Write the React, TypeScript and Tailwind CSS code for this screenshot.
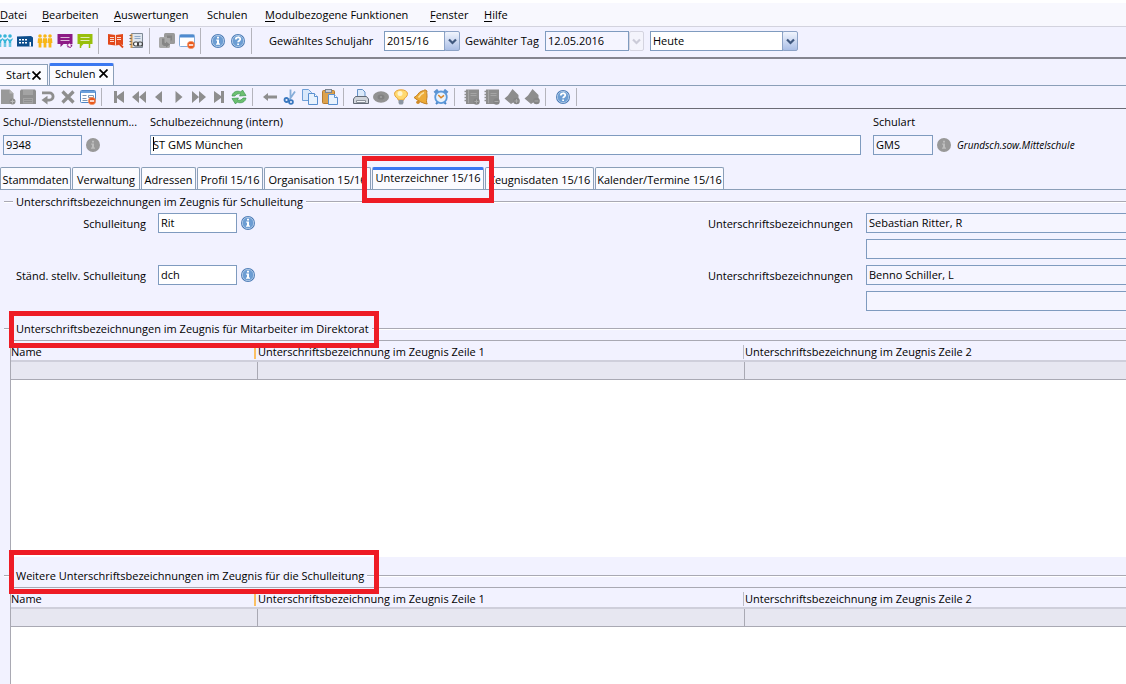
import React from "react";

type IconProps = { children: React.ReactNode };

function Svg({ children }: IconProps) {
  return (
    <svg viewBox="0 0 16 16" width="16" height="16" className="block shrink-0" aria-hidden="true">
      {children}
    </svg>
  );
}

function People({ color, heads }: { color: string; heads: boolean }) {
  return (
    <Svg>
      {[3, 8, 13].map((x) => (
        <g key={x} fill={color}>
          <circle cx={x} cy={3} r={1.8} />
          {heads ? (
            <path d={`M${x - 2.6} 5l1.6 1.4h2L${x + 2.6} 5v1.6L${x + 1.2} 8.6V14h-.9v-4h-.6v4h-.9V8.600L${x - 2.6} 6.600z`} />
          ) : (
            <path d={`M${x - 2} 5.300h4l.4 4.700h-1v4.500h-2.800V10h-1z`} />
          )}
        </g>
      ))}
    </Svg>
  );
}

function BuildingIcon() {
  return (
    <Svg>
      <path fill="#0d4d8c" d="M0 3.500l14-.5 2 1.500v9h-16z" />
      <path fill="#fff" d="M2 6h2v1.500h-2zM5 6h2v1.500h-2zM8 6h2v1.500h-2zM2 9h2v1.500h-2zM5 9h2v1.500h-2zM8 9h2v1.500h-2zM12.500 9h1.500v4.500h-1.500z" />
    </Svg>
  );
}

function BoardIcon({ color, gear }: { color: string; gear?: boolean }) {
  return (
    <Svg>
      <path fill={color} d="M.5 1h15v10h-9l-3 3v-3h-3z" />
      <path stroke="#fff" strokeOpacity=".7" d="M3.500 4.500h9M3.500 7.500h9" />
      {gear ? (
        <circle cx="12.500" cy="12.300" r="2" fill="#fff" stroke={color} strokeWidth="1.500" strokeDasharray="1.200 .6" />
      ) : (
        <path stroke={color} strokeWidth="1.500" d="M3.500 11v4M12.500 11v4" />
      )}
    </Svg>
  );
}

function RedBookIcon() {
  return (
    <Svg>
      <path fill="#e2481b" d="M0 1l7.500 1 7.500-1v11l-2-.5-3-3 1 3.500-3.500.5-7.500-1z" />
      <path stroke="#fff" strokeOpacity=".8" d="M7.500 2v10.500M2 4.500h4M2 6.500h4M2 8.500h4M9 4.500h4M9 6.500h4" />
      <path stroke="#e2481b" strokeWidth="1.800" d="M10 9.500l5 5" />
    </Svg>
  );
}

function NotebookIcon() {
  return (
    <Svg>
      <path fill="#dfe6ee" stroke="#7e8a98" d="M3.500.5h11v14h-11z" />
      <path stroke="#d39a53" strokeWidth="2" d="M3.500 1v14" />
      <path stroke="#666" d="M1.500 2.500h2M1.500 5.500h2M1.500 8.500h2M1.500 11.500h2" />
      <path stroke="#8fa9c8" d="M6.500 3.500h6M6.500 5.500h6" />
      <rect x="5.500" y="9" width="5" height="4" rx="2" fill="#fff" stroke="#444" strokeWidth="1.200" />
      <rect x="9.500" y="9" width="5" height="4" rx="2" fill="none" stroke="#444" strokeWidth="1.200" />
    </Svg>
  );
}

function GraySwapIcon() {
  return (
    <Svg>
      <rect x="5" y="0" width="11" height="11" rx="1.500" fill="#9a9a9a" />
      <rect x="0" y="4" width="11" height="11" rx="1.500" fill="#a8a8a8" />
      <path fill="#858585" d="M3 5.500v5c0 2 2 2.500 4 2.500v1.500l4-3-4-3v1.500c-1.500 0-1.500-.5-1.500-1.500v-3zM8 2.500h5v5h-1.500v-2.500h-3.500z" />
    </Svg>
  );
}

function MinusBadge() {
  return (
    <g>
      <circle cx="12" cy="12" r="3.700" fill="#e9581c" stroke="#f6a47a" strokeWidth=".6" />
      <path stroke="#fff" strokeWidth="1.500" d="M9.800 12h4.400" />
    </g>
  );
}

function WindowMinusIcon() {
  return (
    <Svg>
      <rect x=".5" y="1.500" width="15" height="12" rx="1" fill="#fff" stroke="#82abd9" />
      <path fill="#4f8bd0" d="M1 2h14v2.500h-14z" />
      <MinusBadge />
    </Svg>
  );
}

function FormMinusIcon() {
  return (
    <Svg>
      <rect x=".5" y="1.500" width="15" height="12" rx="1" fill="#fff" stroke="#4f86c6" />
      <path fill="#6ba0dc" d="M1 2h14v2h-14z" />
      <path stroke="#7e96b3" d="M2.500 6.500h4M2.500 9.500h4M8.500 6.500h5v2h-5zM2.500 11.500h5" fill="none" />
      <MinusBadge />
    </Svg>
  );
}

function RoundIcon({ kind, gray }: { kind: "info" | "help"; gray?: boolean }) {
  return (
    <Svg>
      <circle cx="8" cy="8" r="7" fill={gray ? "#999" : "#4a7ab5"} />
      <circle cx="8" cy="8" r="5.700" fill={gray ? "#999" : "#6c9dd3"} stroke={gray ? "#999" : "#b4cde9"} strokeWidth=".9" />
      {kind === "info" ? (
        <path fill={gray ? "#bdbdbd" : "#fff"} d="M7 3.800h2v1.800h-2zM6.200 6.500h2.800v4h1v1.300h-4v-1.300h1v-2.700h-.8z" />
      ) : (
        <path fill="none" stroke="#fff" strokeWidth="1.800" d="M5.800 6.500c0-3 4.500-2.800 4.500-.4 0 1.600-2.200 1.600-2.200 3.200M8.100 10.500v1.600" />
      )}
    </Svg>
  );
}

const G = "#8e8e8e";

function GrayPath({ d }: { d: string }) {
  return (
    <Svg>
      <path fill={G} fillRule="evenodd" d={d} />
    </Svg>
  );
}

function NewIcon() {
  return (
    <Svg>
      <path fill="#999" d="M1 .5h8.500l4 4v10.500h-12.500z" />
      <path fill="#b5b5b5" d="M9.500 .5v4h4z" />
      <circle cx="12.500" cy="12.500" r="3" fill="#8a8a8a" />
      <path stroke="#bbb" d="M12.500 10.500v4M10.500 12.500h4" />
    </Svg>
  );
}

function SaveIcon() {
  return (
    <Svg>
      <path fill="#8f8f8f" d="M0 2l1-1.500h14l1 1.500v13h-16z" />
      <path fill="#a3a3a3" d="M3 1h10v5h-10zM3 9h10v5.500h-10z" />
      <path stroke="#8f8f8f" d="M4 10.500h8M4 12.500h8" />
    </Svg>
  );
}

function UndoIcon() {
  return (
    <Svg>
      <path fill="none" stroke={G} strokeWidth="2.800" d="M2 3.900h7.500a3.600 3.600 0 0 1 0 7.200h-3.500" />
      <path fill={G} d="M7.500 6.800v8.700l-6-4.400z" />
    </Svg>
  );
}

function CrossIcon() {
  return (
    <Svg>
      <path stroke={G} strokeWidth="3.200" d="M2.500 2.500l11 11M13.500 2.500l-11 11" />
    </Svg>
  );
}

function RefreshIcon() {
  return (
    <Svg>
      <path fill="#6cc070" stroke="#3c9650" strokeWidth=".7" d="M1 7c.5-4 5-6 9-4l1.500-2 3.500 5.500-6.500.5 1.200-1.800c-2.500-1-4.700 0-5.700 1.800zM15 9c-.5 4-5 6-9 4l-1.500 2-3.500-5.500 6.500-.5-1.200 1.800c2.500 1 4.700 0 5.700-1.800z" />
    </Svg>
  );
}

function ScissorsIcon() {
  return (
    <Svg>
      <path stroke="#86aed9" strokeWidth="1.800" d="M8.500.5v9M13 2.500l-5.500 8" />
      <circle cx="4.500" cy="11" r="2" fill="none" stroke="#3a78bf" strokeWidth="1.800" />
      <circle cx="9" cy="13" r="1.900" fill="none" stroke="#3a78bf" strokeWidth="1.800" />
    </Svg>
  );
}

function CopyIcon() {
  return (
    <Svg>
      <path fill="#d9e8fa" stroke="#6d9fd8" d="M.5.5h6l3 3v8h-9z" />
      <path fill="#e8f2fd" stroke="#5a90d0" d="M6.500 4.500h6l3 3v8h-9z" />
      <path fill="#fff" stroke="#5a90d0" d="M12.500 4.500v3h3" />
    </Svg>
  );
}

function PasteIcon() {
  return (
    <Svg>
      <rect x=".5" y="1.500" width="12" height="13" rx="1" fill="#dca24c" stroke="#b57b30" />
      <rect x="3.500" y=".5" width="6" height="3" fill="#c9ced6" stroke="#7c8591" />
      <path fill="#e8f2fd" stroke="#5a90d0" d="M6.500 5.500h6l3 3v7h-9z" />
      <path fill="#fff" stroke="#5a90d0" d="M12.500 5.500v3h3" />
    </Svg>
  );
}

function PrintIcon() {
  return (
    <Svg>
      <path fill="#dbe9fa" stroke="#6391c7" d="M4.500.5h5l2.500 2.500v5h-7.500z" />
      <path fill="#d0d4da" stroke="#626975" d="M2.500 7.500h11l2 2.500v4.500h-15v-4.500z" />
      <path fill="#f4f6f9" stroke="#8c929b" d="M3.500 11.500h9v2h-9z" />
    </Svg>
  );
}

function EyeIcon() {
  return (
    <Svg>
      <ellipse cx="8" cy="8" rx="8" ry="5.800" fill="#929292" />
      <ellipse cx="8" cy="8" rx="3.500" ry="2.600" fill="#828282" />
      <circle cx="8" cy="8" r="1" fill="#a2a2a2" />
    </Svg>
  );
}

function BulbIcon() {
  return (
    <Svg>
      <path fill="#ffd970" stroke="#e5a23c" d="M8 .8c7.500 0 8.500 5.700 3 8.900v1.300h-6v-1.300c-5.500-3.200-4.500-8.900 3-8.900z" />
      <circle cx="7" cy="4.500" r="2.500" fill="#fff5cf" />
      <path fill="#8b95a2" d="M5.500 11h5v3l-1 1.500h-3l-1-1.500z" />
    </Svg>
  );
}

function BellIcon() {
  return (
    <Svg>
      <path fill="#edab38" stroke="#c07f22" d="M1 8.500c3.500-1 4-5.500 8-6.500 1.200-.3 2-.3 3-1.200l2 1.200c-.7 2 .3 3.500 0 6-.3 2.500-1 4.500.2 7-4-.5-9-3-13.200-6.500z" />
      <path stroke="#fbe0a0" strokeWidth="1.500" d="M5.500 8.500c1.500-2.500 2.500-4 5.500-5" fill="none" />
      <circle cx="5" cy="13.200" r="1.800" fill="#cf8a28" />
    </Svg>
  );
}

function ClockIcon() {
  return (
    <Svg>
      <path stroke="#5b92d0" strokeWidth="3" d="M1.500 3.800l3.500-2.800M14.500 3.800l-3.500-2.800" />
      <path stroke="#4a84c6" strokeWidth="2" d="M3 15l2-2M13 15l-2-2" />
      <circle cx="8" cy="8.300" r="5.800" fill="#e8f2fd" stroke="#5b98da" strokeWidth="1.800" />
      <path stroke="#d9862b" strokeWidth="1.500" fill="none" d="M5.300 6l2.700 2.800 3-2.500" />
    </Svg>
  );
}

function ListBadgeIcon({ plus }: { plus?: boolean }) {
  return (
    <Svg>
      <path fill="#8d8d8d" d="M2 .5h13v14.500h-13z" />
      <path stroke="#8d8d8d" strokeWidth="1.500" d="M.5 2.500h2M.5 5.500h2M.5 8.500h2M.5 11.500h2" />
      <path stroke="#a5a5a5" d="M4.500 1v13M6.500 4.500h6M6.500 6.500h6" />
      <circle cx="12.500" cy="12.500" r="3.200" fill="#848484" />
      <path stroke="#aaa" d={plus ? "M10.500 12.500h4M12.500 10.500v4" : "M10.500 12.500h4"} />
    </Svg>
  );
}

function HouseBadgeIcon({ plus }: { plus?: boolean }) {
  return (
    <Svg>
      <path fill="#8d8d8d" d="M8.500 0l6 6v4l-7.500 5-6.500-5.500 3.500-3z" />
      <circle cx="12.500" cy="12" r="3.300" fill="#858585" />
      <path stroke="#aaa" d={plus ? "M10.500 12h4M12.500 10v4" : "M10.500 12h4"} />
    </Svg>
  );
}

function Tool({ label, children }: { label: string; children: React.ReactNode }) {
  return (
    <button type="button" aria-label={label} className="block size-4 shrink-0">
      {children}
    </button>
  );
}

function Group({ children }: { children: React.ReactNode }) {
  return (
    <div className="flex shrink-0 items-center">
      <div className="flex gap-1">{children}</div>
      <span className="ml-[5px] mr-[9px] h-[26px] w-px bg-[#b4b4bc]" />
    </div>
  );
}

function SmallGroup({ children }: { children: React.ReactNode }) {
  return (
    <div className="flex shrink-0 items-center">
      <div className="flex gap-1">{children}</div>
      <span className="ml-[5px] mr-[9px] h-[18px] w-px bg-[#b4b4bc]" />
    </div>
  );
}

function DropArrow({ muted }: { muted?: boolean }) {
  return (
    <span
      className={
        muted
          ? "flex h-full w-[15px] items-center justify-center rounded-xs border border-[#d4d4e0] bg-[#f4f4fc]"
          : "flex h-full w-4 items-center justify-center rounded-xs border border-[#8da3c6] bg-linear-to-b from-[#f1f5fd] to-[#abbfe6]"
      }
    >
      <svg viewBox="0 0 9 7" width="9" height="7" aria-hidden="true">
        <path d="M1 1.500l3.500 3.500 3.500-3.500" fill="none" stroke={muted ? "#cbcbd8" : "#40597f"} strokeWidth="2.200" />
      </svg>
    </span>
  );
}

const menus = [
  { key: "D", rest: "atei", box: "w-[42px]" },
  { key: "B", rest: "earbeiten", box: "w-[72px]" },
  { key: "A", rest: "uswertungen", box: "w-[93px]" },
  { key: "", rest: "Schulen", box: "w-[58px]" },
  { key: "M", rest: "odulbezogene Funktionen", box: "w-[165px]" },
  { key: "F", rest: "enster", box: "w-[54px]" },
  { key: "H", rest: "ilfe", box: "w-[42px]" },
];

const tabs = [
  { text: "Stammdaten", box: "w-[71px]" },
  { text: "Verwaltung", box: "w-[68px]" },
  { text: "Adressen", box: "w-[55px]" },
  { text: "Profil 15/16", box: "w-[66px]" },
  { text: "Organisation 15/16", box: "w-[107px]" },
  { text: "Unterzeichner 15/16", box: "w-[112px]", active: true },
  { text: "Zeugnisdaten 15/16", box: "w-[109px]" },
  { text: "Kalender/Termine 15/16", box: "w-[129px]" },
];

function Legend({ children }: { children: React.ReactNode }) {
  return (
    <div className="flex h-4 items-center pl-1">
      <span className="h-0.5 w-[9px] border-t border-[#a9a9b3] bg-white" />
      <h2 className="px-[3px] whitespace-nowrap">{children}</h2>
      <span className="h-0.5 flex-1 border-t border-[#a9a9b3] bg-white" />
    </div>
  );
}

const headCell = "h-[22px] border-t border-b-2 border-t-[#a9a9b3] border-b-[#cfcfdb] p-0 font-normal";
const headText = "flex h-[19px] items-center justify-between pt-[3px]";
const bodyCell = "h-[18px] border-b border-[#a9a9b3] bg-[#e7e7f1] p-0";

function SignatureTable() {
  return (
    <table className="w-full table-fixed border-separate border-spacing-0 text-left">
      <colgroup>
        <col className="w-[247px]" />
        <col className="w-[487px]" />
        <col />
      </colgroup>
      <thead>
        <tr>
          <th className={headCell}>
            <div className={headText}>
              Name <span className="mr-0.5 h-3.5 w-0.5 bg-[#fbc063]" />
            </div>
          </th>
          <th className={headCell}>
            <div className={headText}>
              Unterschriftsbezeichnung im Zeugnis Zeile 1 <span className="mr-px h-3.5 w-px bg-[#bcbcc6]" />
            </div>
          </th>
          <th className={headCell}>
            <div className={headText}>Unterschriftsbezeichnung im Zeugnis Zeile 2</div>
          </th>
        </tr>
      </thead>
      <tbody>
        <tr>
          <td className={`${bodyCell} border-r`} />
          <td className={`${bodyCell} border-r`} />
          <td className={bodyCell} />
        </tr>
      </tbody>
    </table>
  );
}

const field = "block h-5 border border-[#7f9bbf] px-0.5 leading-4 outline-none";

function SignerRow({ id, label, code, value }: { id: string; label: string; code: string; value: string }) {
  return (
    <div className="flex items-start">
      <label htmlFor={id} className="mt-[3px] w-[146px] shrink-0 text-right">
        {label}
      </label>
      <input id={id} defaultValue={code} className={`${field} ml-3 w-[79px] shrink-0 bg-white pb-0.5`} />
      <button type="button" aria-label="Info" className="mt-0.5 ml-[3px] shrink-0">
        <RoundIcon kind="info" />
      </button>
      <label htmlFor={`${id}-a`} className="mt-[3px] ml-auto w-[152px] shrink-0">
        Unterschriftsbezeichnungen
      </label>
      <div className="ml-1.5 flex w-[260px] shrink-0 flex-col gap-1.5">
        <input id={`${id}-a`} readOnly defaultValue={value} className={`${field} w-full border-r-0 bg-[#f5f5ff] pb-0.5`} />
        <input aria-label="Zeile 2" readOnly className={`${field} w-full border-r-0 bg-[#f5f5ff] pb-0.5`} />
      </div>
    </div>
  );
}

function CloseGlyph() {
  return (
    <svg viewBox="0 0 9 9" width="9" height="9" aria-hidden="true">
      <path d="M.5 .5l8 8M8.500 .5l-8 8" stroke="#000" strokeWidth="1.700" />
    </svg>
  );
}

export default function App() {
  return (
    <div className="flex min-h-screen flex-col overflow-hidden bg-[#f2f2ff] font-['Open_Sans','Noto_Sans',sans-serif] text-[11px] leading-4 text-black">
      <nav className="flex h-[27px] border-t-[3px] border-b border-t-white border-b-[#d3d3de] bg-[#f8f8fe] pt-1 whitespace-nowrap">
        {menus.map((m) => (
          <button type="button" key={m.rest} className={`${m.box} h-4 text-left`}>
            <span className="underline underline-offset-2">{m.key}</span>
            {m.rest}
          </button>
        ))}
      </nav>

      <div className="flex h-8 items-center border-b-2 border-[#85858f] pb-0.5 whitespace-nowrap">
        <div className="flex shrink-0 items-center">
          <div className="mr-1 flex w-[13px] justify-end overflow-hidden">
            <Tool label="Schüler"><People color="#35b4d8" heads /></Tool>
          </div>
          <Group>
            <Tool label="Schulen"><BuildingIcon /></Tool>
            <Tool label="Lehrkräfte"><People color="#f8b617" heads={false} /></Tool>
            <Tool label="Unterricht"><BoardIcon color="#8c1a86" gear /></Tool>
            <Tool label="Klassen"><BoardIcon color="#98bf0c" /></Tool>
          </Group>
        </div>
        <Group>
          <Tool label="Berichte"><RedBookIcon /></Tool>
          <Tool label="Notizbuch"><NotebookIcon /></Tool>
        </Group>
        <Group>
          <Tool label="Wechseln"><GraySwapIcon /></Tool>
          <Tool label="Fenster schließen"><WindowMinusIcon /></Tool>
        </Group>
        <Group>
          <Tool label="Info"><RoundIcon kind="info" /></Tool>
          <Tool label="Hilfe"><RoundIcon kind="help" /></Tool>
        </Group>
        <label htmlFor="year" className="ml-2 w-[115px] shrink-0">Gewähltes Schuljahr</label>
        <div className="relative h-5 w-[76px] shrink-0">
          <select id="year" className={`${field} w-[61px] appearance-none bg-white`}>
            <option>2015/16</option>
          </select>
          <span className="pointer-events-none absolute top-0 right-0 h-5"><DropArrow /></span>
        </div>
        <label htmlFor="day" className="ml-[5px] w-20 shrink-0">Gewählter Tag</label>
        <input id="day" readOnly defaultValue="12.05.2016" className={`${field} w-[84px] shrink-0 bg-[#f5f5ff] pb-0.5`} />
        <button type="button" aria-label="Kalender" disabled className="h-5 shrink-0"><DropArrow muted /></button>
        <div className="relative ml-1.5 h-5 w-[148px] shrink-0">
          <select aria-label="Zeitraum" className={`${field} w-[133px] appearance-none bg-white`}>
            <option>Heute</option>
          </select>
          <span className="pointer-events-none absolute top-0 right-0 h-5"><DropArrow /></span>
        </div>
      </div>

      <div className="flex h-[27px] items-end gap-px border-b border-[#8b9fb8] whitespace-nowrap">
        <div className="flex h-[21px] w-12 items-center border-t border-r border-[#8b9fb8] bg-[#fbfbff] pl-1.5">
          <button type="button" className="w-[26px] text-left">Start</button>
          <button type="button" aria-label="Start schließen"><CloseGlyph /></button>
        </div>
        <div className="flex h-[22px] w-[65px] items-center rounded-t-xs border-x border-t-3 border-x-[#8b9fb8] border-t-[#3b78f0] bg-[#fbfbff] pb-1 pl-[5px]">
          <button type="button" className="w-[44px] text-left">Schulen</button>
          <button type="button" aria-label="Schulen schließen"><CloseGlyph /></button>
        </div>
      </div>

      <div className="flex h-[23px] items-center border-b border-[#6b6b75]">
        <SmallGroup>
          <Tool label="Neu"><NewIcon /></Tool>
          <Tool label="Speichern"><SaveIcon /></Tool>
          <Tool label="Rückgängig"><UndoIcon /></Tool>
          <Tool label="Löschen"><CrossIcon /></Tool>
          <Tool label="Formular schließen"><FormMinusIcon /></Tool>
        </SmallGroup>
        <SmallGroup>
          <Tool label="Erster"><GrayPath d="M3 2h3v5l7-5v12l-7-5v5h-3z" /></Tool>
          <Tool label="Zurückblättern"><GrayPath d="M8 2v12l-7-6zM15 2v12l-7-6z" /></Tool>
          <Tool label="Vorheriger"><GrayPath d="M11 2v12l-7-6z" /></Tool>
          <Tool label="Nächster"><GrayPath d="M4.500 2v12l7-6z" /></Tool>
          <Tool label="Vorblättern"><GrayPath d="M1 2v12l7-6zM8 2v12l7-6z" /></Tool>
          <Tool label="Letzter"><GrayPath d="M13 2h-3v5l-7-5v12l7-5v5h3z" /></Tool>
          <Tool label="Aktualisieren"><RefreshIcon /></Tool>
        </SmallGroup>
        <SmallGroup>
          <Tool label="Links"><GrayPath d="M1 8l5-4v2.500h9v3h-9v2.500z" /></Tool>
          <Tool label="Ausschneiden"><ScissorsIcon /></Tool>
          <Tool label="Kopieren"><CopyIcon /></Tool>
          <Tool label="Einfügen"><PasteIcon /></Tool>
        </SmallGroup>
        <SmallGroup>
          <Tool label="Drucken"><PrintIcon /></Tool>
          <Tool label="Ansicht"><EyeIcon /></Tool>
          <Tool label="Hinweis"><BulbIcon /></Tool>
          <Tool label="Meldung"><BellIcon /></Tool>
          <Tool label="Termin"><ClockIcon /></Tool>
        </SmallGroup>
        <SmallGroup>
          <Tool label="Liste hinzufügen"><ListBadgeIcon plus /></Tool>
          <Tool label="Liste entfernen"><ListBadgeIcon /></Tool>
          <Tool label="Merkmal hinzufügen"><HouseBadgeIcon plus /></Tool>
          <Tool label="Merkmal entfernen"><HouseBadgeIcon /></Tool>
        </SmallGroup>
        <SmallGroup>
          <Tool label="Hilfe"><RoundIcon kind="help" /></Tool>
        </SmallGroup>
      </div>

      <section className="flex gap-3 pt-[5px] whitespace-nowrap">
        <div className="w-[135px] shrink-0 pl-[3px]">
          <label htmlFor="nr" className="mb-[5px] block">Schul-/Dienststellennum...</label>
          <div className="flex items-center gap-[3px]">
            <input id="nr" readOnly defaultValue="9348" className={`${field} w-[79px] bg-[#f5f5ff] pb-0.5`} />
            <RoundIcon kind="info" gray />
          </div>
        </div>
        <div className="flex-1 pl-[3px]">
          <label htmlFor="name" className="mb-[5px] block">Schulbezeichnung (intern)</label>
          <div className="relative">
            <input id="name" defaultValue="ST GMS München" className={`${field} w-full bg-white pb-0.5`} />
            <span className="absolute top-0.5 left-[3px] h-3.5 w-px bg-black" />
          </div>
        </div>
        <div className="w-[253px] shrink-0">
          <label htmlFor="art" className="mb-[5px] block">Schulart</label>
          <div className="flex items-center gap-[3px]">
            <input id="art" readOnly defaultValue="GMS" className={`${field} w-[60px] bg-[#f5f5ff] pb-0.5`} />
            <RoundIcon kind="info" gray />
            <span className="pl-0.5 text-[10px] italic">Grundsch.sow.Mittelschule</span>
          </div>
        </div>
      </section>

      <div className="relative mt-3 flex h-[23px] items-end gap-px border-b border-[#8b9fb8] whitespace-nowrap">
        {tabs.map((t) => (
          <button
            type="button"
            key={t.text}
            className={`${t.box} shrink-0 rounded-t-xs border-x text-center ${
              t.active
                ? "h-[22px] border-t-3 border-x-[#8b9fb8] border-t-[#3b78f0] bg-[#fbfbff] pb-1"
                : "h-[22px] border-t border-[#8b9fb8] bg-[#fbfbff] pt-0.5"
            }`}
          >
            {t.text}
          </button>
        ))}
        <span className="pointer-events-none absolute -top-[11px] left-[362px] h-[47px] w-[132px] border-5 border-[#ee1c25]" />
      </div>

      <section className="pt-1">
        <Legend>Unterschriftsbezeichnungen im Zeugnis für Schulleitung</Legend>
        <div className="flex flex-col gap-1.5 pt-[3px] whitespace-nowrap">
          <SignerRow id="lead" label="Schulleitung" code="Rit" value="Sebastian Ritter, R" />
          <SignerRow id="deputy" label="Ständ. stellv. Schulleitung" code="dch" value="Benno Schiller, L" />
        </div>
      </section>

      <section className="relative pt-[10px]">
        <Legend>Unterschriftsbezeichnungen im Zeugnis für Mitarbeiter im Direktorat</Legend>
        <div className="mt-[3px] ml-2.5 border-l border-[#a9a9b3]">
          <SignatureTable />
          <div className="h-[177px] bg-white" />
        </div>
        <span className="pointer-events-none absolute top-0 left-[9px] h-[37px] w-[370px] border-5 border-[#ee1c25]" />
      </section>

      <section className="relative flex flex-1 flex-col pt-[11px]">
        <Legend>Weitere Unterschriftsbezeichnungen im Zeugnis für die Schulleitung</Legend>
        <div className="mt-[3px] ml-2.5 flex flex-1 flex-col border-l border-[#a9a9b3]">
          <SignatureTable />
          <div className="min-h-14 flex-1 bg-white" />
        </div>
        <span className="pointer-events-none absolute -top-[7px] left-[9px] h-11 w-[370px] border-5 border-[#ee1c25]" />
      </section>
    </div>
  );
}
